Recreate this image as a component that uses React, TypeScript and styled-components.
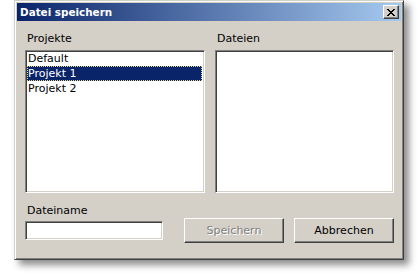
import React from "react";
import styled, { createGlobalStyle } from "styled-components";

const Global = createGlobalStyle`
  html, body { margin: 0; padding: 0; background: #ffffff; }
  body { font-family: "DejaVu Sans", Verdana, sans-serif; font-size: 11px; color: #000; }
`;

const Page = styled.div`
  width: 420px;
  height: 276px;
  overflow: hidden;
`;

const Window = styled.div`
  margin-left: 14px;
  width: 390px;
  height: 260px;
  box-sizing: border-box;
  background: #d4d0c8;
  border: 1px solid;
  border-color: #d4d0c8 #404040 #404040 #d4d0c8;
  box-shadow: inset 1px 1px 0 #ffffff, inset -1px -1px 0 #808080,
    5px 5px 7px rgba(0, 0, 0, 0.45);
  padding: 2px;
  display: flex;
  flex-direction: column;
`;

const TitleBar = styled.div`
  height: 18px;
  display: flex;
  align-items: center;
  justify-content: space-between;
  background: linear-gradient(to right, #0a246a, #a6caf0);
  padding-left: 3px;
  padding-right: 2px;
`;

const Title = styled.span`
  color: #ffffff;
  font-weight: bold;
  font-size: 10.4px;
  font-family: "DejaVu Sans", Verdana, sans-serif;
`;

const CloseButton = styled.div`
  width: 16px;
  height: 14px;
  box-sizing: border-box;
  background: #d4d0c8;
  border-top: 1px solid #ffffff;
  border-left: 1px solid #ffffff;
  border-right: 1px solid #404040;
  border-bottom: 1px solid #404040;
  box-shadow: inset -1px -1px 0 #808080;
  display: flex;
  align-items: center;
  justify-content: center;
`;

const Content = styled.div`
  flex: 1;
  display: flex;
  flex-direction: column;
  padding: 11px 7px 0 8px;
`;

const Columns = styled.div`
  display: grid;
  grid-template-columns: 180px 179px;
  column-gap: 10px;
`;

const Column = styled.div`
  display: flex;
  flex-direction: column;
`;

const Label = styled.div`
  line-height: 13px;
  height: 13px;
  padding-left: 2px;
  margin-bottom: 5px;
`;

const ListBox = styled.div`
  height: 143px;
  box-sizing: border-box;
  background: #ffffff;
  border: 1px solid;
  border-color: #808080 #ffffff #ffffff #808080;
  box-shadow: inset 1px 1px 0 #404040, inset -1px -1px 0 #d4d0c8;
  padding: 0 2px 2px 1px;
`;

const Item = styled.div<{ $selected?: boolean }>`
  height: 15px;
  line-height: 15px;
  box-sizing: border-box;
  padding-left: 1px;
  white-space: nowrap;
  color: ${(p) => (p.$selected ? "#ffffff" : "#000000")};
  background: ${(p) => (p.$selected ? "#0a246a" : "transparent")};
  outline: ${(p) => (p.$selected ? "1px dotted #e8d890" : "none")};
  outline-offset: -1px;
`;

const BottomRow = styled.div`
  display: flex;
  align-items: flex-end;
  margin-top: 11px;
`;

const Field = styled.div`
  display: flex;
  flex-direction: column;
  width: 139px;
  margin-right: 21px;
  margin-bottom: 3px;
`;

const FieldLabel = styled(Label)`
  margin-bottom: 4px;
`;

const TextInput = styled.div`
  height: 19px;
  box-sizing: border-box;
  background: #ffffff;
  border: 1px solid;
  border-color: #808080 #ffffff #ffffff #808080;
  box-shadow: inset 1px 1px 0 #404040, inset -1px -1px 0 #d4d0c8;
`;

const Buttons = styled.div`
  display: flex;
  gap: 10px;
`;

const Button = styled.div<{ $disabled?: boolean }>`
  width: 100px;
  height: 25px;
  box-sizing: border-box;
  background: #d4d0c8;
  border: 1px solid;
  border-color: #ffffff #404040 #404040 #ffffff;
  box-shadow: inset -1px -1px 0 #808080;
  display: flex;
  align-items: center;
  justify-content: center;
  color: ${(p) => (p.$disabled ? "#808080" : "#000000")};
  text-shadow: ${(p) => (p.$disabled ? "1px 1px 0 #ffffff" : "none")};
`;

export default function App() {
  return (
    <Page>
      <Global />
      <Window>
        <TitleBar>
          <Title>Datei speichern</Title>
          <CloseButton>
            <svg width="8" height="7" viewBox="0 0 8 7">
              <path
                d="M0 0h2v1h1v1h2V1h1V0h2v1H7v1H6v1H5v1h1v1h1v1h1v1H6V6H5V5H3v1H2v1H0V6h1V5h1V4h1V3H2V2H1V1H0z"
                fill="#000"
              />
            </svg>
          </CloseButton>
        </TitleBar>
        <Content>
          <Columns>
            <Column>
              <Label>Projekte</Label>
              <ListBox>
                <Item>Default</Item>
                <Item $selected>Projekt 1</Item>
                <Item>Projekt 2</Item>
              </ListBox>
            </Column>
            <Column>
              <Label>Dateien</Label>
              <ListBox />
            </Column>
          </Columns>
          <BottomRow>
            <Field>
              <FieldLabel>Dateiname</FieldLabel>
              <TextInput />
            </Field>
            <Buttons>
              <Button $disabled>Speichern</Button>
              <Button>Abbrechen</Button>
            </Buttons>
          </BottomRow>
        </Content>
      </Window>
    </Page>
  );
}
